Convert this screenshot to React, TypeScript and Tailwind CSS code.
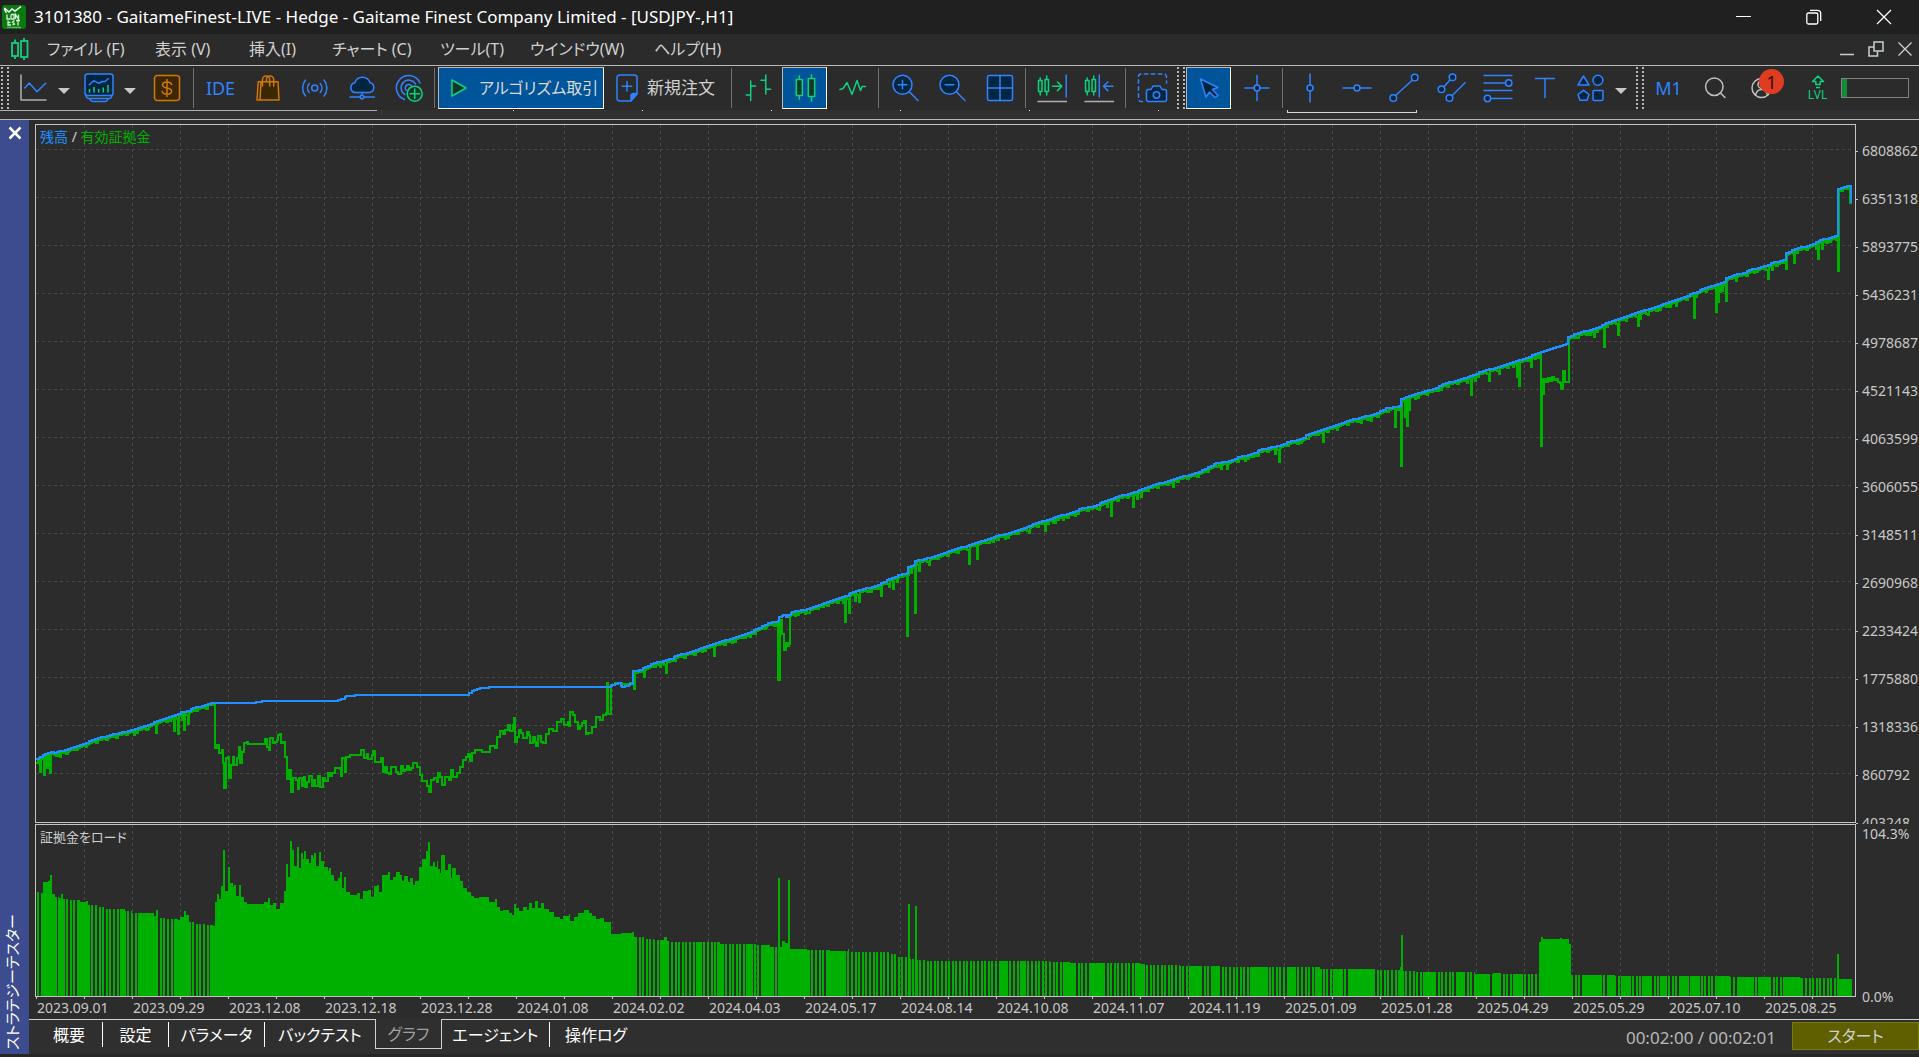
import React from "react";

type Pt = [number, number];

const BLUE = "#3083ff";
const GREEN = "#10d080";
const NAVY = "#00253f";
const ORANGE = "#d07800";

/* ---------- chart data (drawing units) ---------- */

const BALANCE: Pt[] = [
  [36,759],[40,757],[45,754],[51,752],[54,753],[59,751],[65,750],[80,745],[95,739],[110,735],[132,730],[145,726],[160,720],[175,715],[181,712],[188,711],[193,708],[202,706],[212,703],[250,703],[262,701],[335,701],[342,699],[346,696],[358,695],[466,695],[474,690],[480,688],[492,687],[608,687],[612,685],[618,683],[622,687],[626,686],[630,684],[632,684],[633,671],[640,670],[645,667],[654,663],[671,659],[675,656],[693,651],[701,648],[713,644],[730,639],[736,637],[748,633],[756,629],[769,623],[778,621],[779,617],[783,615],[786,617],[788,615],[792,612],[807,609],[824,603],[836,599],[846,596],[850,593],[860,590],[875,586],[889,579],[899,575],[907,573],[908,567],[914,565],[915,561],[929,558],[949,551],[969,545],[982,541],[996,536],[1006,534],[1029,526],[1033,524],[1047,520],[1055,517],[1073,512],[1082,508],[1094,506],[1102,502],[1116,497],[1135,492],[1139,490],[1153,485],[1171,480],[1180,477],[1196,473],[1208,467],[1216,463],[1226,462],[1239,457],[1255,453],[1259,450],[1278,446],[1288,442],[1304,438],[1306,435],[1324,429],[1333,426],[1347,421],[1374,414],[1387,408],[1400,406],[1401,399],[1406,397],[1419,393],[1433,389],[1443,384],[1465,378],[1470,376],[1480,372],[1504,365],[1520,360],[1541,352],[1557,347],[1567,344],[1568,337],[1575,334],[1596,328],[1606,323],[1618,319],[1632,314],[1649,309],[1663,304],[1675,300],[1694,293],[1702,289],[1712,286],[1718,284],[1725,282],[1726,278],[1734,275],[1744,273],[1749,270],[1765,266],[1771,263],[1785,260],[1786,253],[1795,249],[1810,245],[1820,240],[1837,236],[1838,189],[1844,187],[1849,186],[1851,187],[1851,202],
];

/* short equity drawdowns: position and lowest level */
const DIPS: Pt[] = [
  [40,772],[44,775],[46,768],[48,768],[50,773],[61,757],[68,752],[87,747],[135,735],[148,729],[156,733],[170,721],[174,731],[179,734],[182,720],[185,730],[188,724],
  [644,677],[661,667],[666,673],[703,652],[714,656],[732,643],[751,637],[767,628],[795,616],[806,614],[810,613],[824,607],[843,603],[846,622],[849,613],[856,601],[860,602],[871,592],[882,596],[889,587],[893,589],[897,582],[908,636],[911,573],[915,613],[919,571],
  [930,565],[969,564],[978,559],[990,543],[994,542],[1005,539],[1030,533],[1045,531],[1053,523],[1056,523],[1064,520],[1075,516],[1100,510],[1108,507],[1111,516],[1134,507],[1137,499],[1141,497],[1174,487],[1222,469],[1228,469],[1246,461],[1254,457],[1276,454],[1280,462],[1302,443],[1324,442],[1338,430],[1361,423],[1372,421],[1395,427],[1401,466],[1405,417],[1408,426],[1410,410],[1416,399],[1427,395],[1441,390],[1467,383],[1471,395],[1476,381],[1489,381],[1499,374],[1514,367],[1517,377],[1519,386],[1532,367],[1536,359],
  [1575,338],[1579,338],[1590,335],[1594,337],[1605,347],[1619,335],[1627,321],[1639,326],[1641,319],[1649,315],[1660,310],[1671,307],[1676,306],[1694,318],[1697,297],[1707,292],[1716,312],[1718,302],[1720,292],[1723,291],[1726,301],[1737,281],[1755,273],[1769,279],[1772,270],[1786,269],[1794,263],[1816,249],[1819,259],[1822,249],[1830,242],
];

/* long stretches where equity leaves the balance line */
const SWINGS: Pt[][] = [
  [[208,705],[214,705],[215,748],[217,745],[219,753],[222,750],[223,763],[224,788],[226,758],[228,757],[229,778],[231,765],[233,757],[234,765],[237,758],[239,747],[240,763],[242,752],[244,743],[247,742],[248,744],[263,744],[265,739],[267,747],[269,750],[270,738],[273,743],[275,742],[277,740],[278,735],[280,734],[281,743],[283,742],[285,757],[287,779],[289,770],[291,792],[293,778],[296,780],[298,789],[299,778],[302,786],[304,777],[305,787],[307,782],[309,776],[312,786],[313,780],[315,786],[318,776],[320,787],[323,778],[325,781],[328,773],[330,776],[332,773],[335,768],[340,769],[341,776],[342,758],[345,772],[346,757],[350,755],[359,755],[361,750],[364,758],[367,754],[368,759],[372,755],[373,751],[375,762],[378,762],[381,758],[383,772],[385,767],[387,773],[389,774],[391,767],[395,767],[396,772],[398,774],[401,766],[403,771],[405,770],[407,766],[409,770],[411,768],[413,763],[415,763],[417,767],[420,775],[422,781],[425,781],[427,786],[429,792],[431,780],[434,778],[437,782],[438,773],[440,777],[442,785],[445,777],[449,780],[451,770],[453,777],[457,773],[460,767],[463,760],[466,757],[468,754],[470,761],[472,753],[475,750],[482,752],[488,752],[490,746],[495,748],[497,737],[500,731],[503,734],[505,730],[508,725],[510,731],[513,725],[514,718],[515,742],[517,737],[519,730],[521,733],[523,738],[527,732],[529,735],[530,743],[533,737],[535,742],[536,746],[538,736],[541,742],[543,743],[546,734],[549,729],[553,731],[557,722],[561,719],[564,725],[568,722],[569,726],[570,712],[573,715],[575,722],[578,729],[580,726],[582,723],[584,721],[586,734],[588,733],[592,727],[596,717],[600,720],[603,715],[606,713],[607,683],[608,714],[610,714],[611,685],[615,683],[622,684],[630,683],[633,683],[634,689],[635,672]],
  [[777,623],[778,680],[780,620],[782,634],[784,650],[786,643],[788,646],[789,644],[790,616]],
  [[1540,355],[1541,446],[1542,379],[1543,394],[1544,379],[1546,382],[1548,378],[1550,381],[1552,377],[1554,380],[1556,379],[1558,382],[1560,383],[1561,389],[1563,371],[1565,382],[1567,382],[1569,339]],
  [[1837,238],[1838,271],[1839,191],[1843,189],[1848,188],[1850,203],[1851,203]],
];

/* upper edge of the deposit load bars */
const LOAD: Pt[] = [
  [36,892],[41,893],[43,882],[48,881],[50,875],[52,894],[55,897],[59,898],[61,894],[63,899],[70,900],[80,902],[86,901],[88,905],[97,907],[105,909],[125,911],[132,913],[145,913],[154,916],[156,910],[158,918],[165,919],[178,920],[180,917],[184,911],[186,915],[189,922],[195,924],[206,925],[213,926],[215,902],[217,894],[219,899],[221,886],[223,850],[225,891],[228,867],[230,883],[233,887],[234,885],[236,896],[239,885],[241,897],[244,902],[247,904],[264,902],[268,898],[270,905],[273,903],[276,909],[280,903],[284,891],[286,864],[288,877],[290,841],[292,850],[294,866],[297,847],[299,868],[301,853],[303,859],[304,851],[306,859],[309,863],[311,855],[313,858],[314,853],[316,866],[319,852],[321,861],[324,867],[328,871],[329,868],[331,875],[334,881],[338,878],[340,872],[342,888],[344,877],[346,892],[350,895],[357,893],[360,899],[363,891],[368,890],[371,897],[374,886],[377,885],[379,892],[382,875],[388,872],[390,880],[393,877],[396,872],[400,875],[402,881],[404,876],[408,882],[410,878],[413,885],[415,881],[419,867],[422,859],[426,851],[428,842],[430,866],[433,862],[435,867],[437,861],[438,869],[440,873],[441,855],[445,870],[448,864],[451,878],[452,868],[456,875],[460,881],[463,888],[467,892],[471,896],[474,898],[479,897],[489,902],[495,899],[497,907],[500,911],[503,910],[509,913],[512,915],[514,904],[516,908],[519,911],[523,907],[527,910],[529,903],[532,908],[535,901],[538,908],[541,903],[544,909],[549,912],[554,917],[560,919],[563,916],[569,914],[570,921],[574,917],[578,913],[584,910],[589,913],[592,916],[596,919],[600,918],[604,922],[611,934],[621,933],[632,932],[634,937],[646,939],[654,940],[664,937],[667,941],[670,942],[697,942],[720,944],[756,945],[770,947],[778,878],[780,947],[782,941],[785,943],[788,880],[790,949],[807,950],[830,951],[848,949],[851,952],[880,952],[890,954],[897,957],[907,958],[908,904],[910,959],[915,906],[917,960],[927,961],[990,961],[1050,962],[1070,963],[1140,964],[1145,965],[1180,966],[1220,967],[1290,967],[1320,969],[1360,969],[1375,970],[1400,967],[1401,935],[1403,971],[1415,972],[1475,974],[1493,973],[1501,974],[1539,942],[1541,937],[1543,939],[1560,938],[1562,939],[1569,944],[1571,975],[1615,976],[1730,977],[1800,978],[1837,954],[1839,979],[1853,979],
];

const SOLID: Pt[] = [
  [43,55],[58,62],[77,88],[120,125],[139,157],[176,189],[210,213],[215,634],[662,668],[696,700],[717,723],[746,752],[761,772],[778,797],[799,807],[828,845],[908,909],[915,916],[1000,1006],[1020,1025],[1065,1073],[1089,1103],[1137,1142],[1189,1201],[1213,1217],[1250,1267],[1287,1293],[1317,1321],[1335,1341],[1350,1359],[1361,1374],[1400,1402],[1423,1433],[1456,1462],[1475,1487],[1493,1500],[1514,1520],[1539,1570],[1583,1600],[1609,1614],[1623,1628],[1642,1651],[1660,1666],[1679,1688],[1690,1699],[1716,1728],[1737,1753],[1758,1768],[1783,1802],[1837,1851],
];

function stepPath(points: Pt[]) {
  return points.map(([x, y], i) => (i === 0 ? `M${x} ${y}` : `H${x}V${y}`)).join("");
}

function valueAt(points: Pt[], x: number) {
  for (let i = 1; i < points.length; i++) {
    const [x1, y1] = points[i];
    if (x1 >= x) {
      const [x0, y0] = points[i - 1];
      return x1 === x0 ? y1 : Math.round(y0 + ((y1 - y0) * (x - x0)) / (x1 - x0));
    }
  }
  return points[points.length - 1][1];
}

function levelAt(points: Pt[], x: number) {
  let y = points[0][1];
  for (const p of points) {
    if (p[0] > x) break;
    y = p[1];
  }
  return y;
}

function balancePoints(): Pt[] {
  const out: Pt[] = [];
  for (let i = 0; i < BALANCE.length; i++) {
    const [x, y] = BALANCE[i];
    if (i > 0) {
      for (let k = BALANCE[i - 1][0] + 3; k < x; k += 3) out.push([k, valueAt(BALANCE, k)]);
    }
    out.push([x, y]);
  }
  return out;
}

function equityPoints(): Pt[] {
  const out: Pt[] = [];
  let x = 36;
  let dip = 0;
  let n = 0;
  while (x < 1852) {
    const swing = SWINGS.find((s) => x >= s[0][0] && x < s[s.length - 1][0]);
    if (swing) {
      out.push(...swing);
      x = swing[swing.length - 1][0] + 1;
      continue;
    }
    while (dip < DIPS.length && DIPS[dip][0] < x - 2) dip++;
    const base = valueAt(BALANCE, x) + 2;
    if (dip < DIPS.length && Math.abs(DIPS[dip][0] - x) <= 1) {
      out.push([x, DIPS[dip][1]], [x + 1, base]);
      dip++;
    } else {
      out.push([x, base + ((n * 7) % 5 === 0 ? 2 : 0)]);
    }
    n++;
    x += 2;
  }
  return out;
}

function loadPath() {
  const bars: string[] = [];
  for (let x = 36; x < 1852; x++) {
    const solid = SOLID.some(([a, b]) => x >= a && x <= b);
    const phase = ((x - 37) * 10) % 36;
    if (solid || (phase >= 0 && phase < 20)) bars.push(`M${x} 996V${levelAt(LOAD, x)}h1V996z`);
  }
  return bars.join("");
}

const BALANCE_PATH = stepPath(balancePoints());
const EQUITY_PATH = stepPath(equityPoints());
const LOAD_PATH = loadPath();

const COLS = Array.from({ length: 37 }, (_, i) => 84 + i * 48);
const ROWS = Array.from({ length: 14 }, (_, i) => 149 + i * 48);

const VALUES = ["6808862","6351318","5893775","5436231","4978687","4521143","4063599","3606055","3148511","2690968","2233424","1775880","1318336","860792","403248"];
const DATES = ["2023.09.01","2023.09.29","2023.12.08","2023.12.18","2023.12.28","2024.01.08","2024.02.02","2024.04.03","2024.05.17","2024.08.14","2024.10.08","2024.11.07","2024.11.19","2025.01.09","2025.01.28","2025.04.29","2025.05.29","2025.07.10","2025.08.25"];

/* ---------- icons ---------- */

function Icon({ children, color = BLUE }: { children: React.ReactNode; color?: string }) {
  return (
    <svg viewBox="0 0 32 32" className="size-8 shrink-0" fill="none" stroke={color} strokeWidth="1.5" strokeLinecap="round" strokeLinejoin="round" aria-hidden="true">
      {children}
    </svg>
  );
}

function ToolButton({ label, active, children, className = "w-[47px] justify-center" }: { label: string; active?: boolean; children: React.ReactNode; className?: string }) {
  return (
    <button
      type="button"
      aria-label={label}
      className={`flex h-[42px] shrink-0 items-center ${className} ${active ? "border border-t-[#b8b8b8] border-l-[#b8b8b8] border-r-white border-b-white bg-[#005499]" : ""}`}
    >
      {children}
    </button>
  );
}

function Drop({ label }: { label: string }) {
  return (
    <button type="button" aria-label={label} className="flex h-[42px] w-3 shrink-0 items-center justify-center pt-1.5">
      <svg viewBox="0 0 12 6" className="h-1.5 w-3" fill="#c8c8c8" aria-hidden="true"><path d="M0 0H12L6 6z" /></svg>
    </button>
  );
}

const Sep = () => <span className="mr-[3px] ml-0.5 h-10 w-px shrink-0 bg-[#707070]" />;

const Grip = () => (
  <span className="flex h-[42px] w-2.5 shrink-0 gap-1 pl-px">
    <span className="w-0.5 bg-[repeating-linear-gradient(to_bottom,#b8b8b8_0_2px,transparent_2px_4px)]" />
    <span className="w-0.5 bg-[repeating-linear-gradient(to_bottom,#b8b8b8_0_2px,transparent_2px_4px)]" />
  </span>
);

function Toolbar() {
  return (
    <div className="flex h-11 items-center bg-[#2b2b2b]">
      <Grip />
      <ToolButton label="Charts" className="w-12 justify-center">
        <Icon>
          <path d="M3 3V28H28" stroke="#b0b0b0" />
          <path d="M6.7 16 11.3 11 19 19.7 27.7 11.3" />
        </Icon>
      </ToolButton>
      <Drop label="Chart list" />
      <ToolButton label="Indicators" className="w-[54px] justify-center pl-1">
        <Icon>
          <rect x="2" y="2" width="28" height="21.5" rx="2.5" fill={NAVY} />
          <path d="M3 23.5Q3.5 26.5 6 26.5H26Q28.5 26.5 29 23.5M6.5 26.5Q8 29.5 10 29.5H22Q24 29.5 25.5 26.5" />
          <path d="M6.3 12.7 10.7 8.7 16 11.3 19 9.5H22L25.3 6.7" />
          <path d="M6.5 20.5V17M11 20.5V15M15.7 20.5V17M20.3 20.5V15.5M25 20.5V13" stroke={GREEN} strokeLinecap="butt" />
        </Icon>
      </ToolButton>
      <Drop label="Indicator list" />
      <ToolButton label="Quotes" className="w-[55px] justify-center pl-1.5">
        <Icon color={ORANGE}>
          <rect x="3.5" y="3.5" width="25" height="25" rx="3" fill="#3b2700" />
          <path d="M20.6 12.6C20.2 10.9 18.4 10 16 10c-2.6 0-4.4 1.1-4.4 2.9 0 4.3 9 2.1 9 6.3 0 1.9-1.9 2.9-4.6 2.9s-4.5-1-4.8-2.8M16 7.5v17" />
        </Icon>
      </ToolButton>
      <Sep />
      <ToolButton label="IDE"><span className="text-lg text-[#3083ff]">IDE</span></ToolButton>
      <ToolButton label="Market">
        <Icon color={ORANGE}>
          <path d="M6.2 9.7H26L27 28H5z" fill="#3b2700" />
          <path d="M9 9.7 8 28M10.5 14V7.5a3.6 3.6 0 0 1 7.2 0V14M14.5 9.7V7.5a3.6 3.6 0 0 1 7.2 0V14" />
        </Icon>
      </ToolButton>
      <ToolButton label="Signals">
        <Icon>
          <circle cx="15.7" cy="16" r="3" />
          <path d="M10.2 11.5a7 7 0 0 0 0 9M21.2 11.5a7 7 0 0 1 0 9M6.5 8a12.5 12.5 0 0 0 0 16M25 8a12.5 12.5 0 0 1 0 16" />
        </Icon>
      </ToolButton>
      <ToolButton label="Cloud">
        <Icon>
          <path d="M9 20.5H23.5A5 5 0 0 0 24 10.7 8 8 0 0 0 8.8 10.7 5 5 0 0 0 9 20.5z" fill={NAVY} />
          <path d="M16 20.5V23M4 25H14M18 25H28.5" />
          <circle cx="16" cy="25" r="1.8" />
        </Icon>
      </ToolButton>
      <ToolButton label="Hosting">
        <Icon>
          <path d="M11.5 27.5A12.3 12.3 0 1 1 27 11M12 22.5A7.7 7.7 0 1 1 22.5 12M13.5 18.5A3.4 3.4 0 1 1 18.5 14" />
          <g stroke={GREEN}>
            <circle cx="21.7" cy="21.7" r="7.5" fill="#10382a" />
            <path d="M21.7 17V26.4M17 21.7H26.4" />
          </g>
        </Icon>
      </ToolButton>
      <Sep />
      <ToolButton label="アルゴリズム取引" active className="w-[166px] gap-3 pl-3">
        <svg viewBox="0 0 16 18" className="h-[18px] w-4" fill="#10382a" stroke={GREEN} strokeWidth="1.5" strokeLinejoin="round" aria-hidden="true"><path d="M1 1 15 9 1 17z" /></svg>
        <span className="text-base whitespace-nowrap text-[#d8d8d8]">アルゴリズム取引</span>
      </ToolButton>
      <ToolButton label="新規注文" className="w-[125px] gap-1 pl-[7px]">
        <Icon>
          <path d="M9 3H23a3 3 0 0 1 3 3V22L20 29H9a3 3 0 0 1-3-3V6a3 3 0 0 1 3-3z" />
          <path d="M26 21.5H22.5a2.5 2.5 0 0 0-2.5 2.5V28.5z" fill={BLUE} />
          <path d="M16 9.5V19M11.2 14.3H20.8" />
        </Icon>
        <span className="text-[17px] whitespace-nowrap text-[#d0d0d0]">新規注文</span>
      </ToolButton>
      <Sep />
      <ToolButton label="Bar chart">
        <Icon color={GREEN}><path d="M7.7 9V28.5M3.2 23H7.7M7.7 14H12.6M22.8 3V22M18 8.3H22.8M22.8 17.3H27.7" /></Icon>
      </ToolButton>
      <ToolButton label="Candlesticks" active className="mr-0.5 w-[45px] justify-center">
        <Icon color={GREEN}>
          <path d="M10.3 4V27M22.5 3V29" />
          <rect x="7.3" y="7.5" width="6" height="16" fill="#123a2a" />
          <rect x="19.3" y="6.5" width="6.4" height="18" fill="#123a2a" />
        </Icon>
      </ToolButton>
      <ToolButton label="Line chart">
        <Icon color={GREEN}><path d="M3 17.5 6 16.5 10 10.5 15 22.5 20 8.5 23.5 18.5 25 14.5H28.5" /></Icon>
      </ToolButton>
      <Sep />
      <ToolButton label="Zoom in">
        <Icon><circle cx="12.5" cy="12.8" r="9.5" fill={NAVY} /><path d="M19.5 20 28 28.5M12.5 8.5V17M8.2 12.8H16.8" /></Icon>
      </ToolButton>
      <ToolButton label="Zoom out">
        <Icon><circle cx="12.5" cy="12.8" r="9.5" fill={NAVY} /><path d="M19.5 20 28 28.5M8.2 12.8H16.8" /></Icon>
      </ToolButton>
      <ToolButton label="Tile windows">
        <Icon><rect x="3.5" y="3.5" width="25" height="25" rx="2" fill={NAVY} /><path d="M16 3.5V28.5M3.5 16H28.5" /></Icon>
      </ToolButton>
      <Sep />
      <ToolButton label="Auto scroll">
        <Icon color={GREEN}>
          <path d="M3.2 6V23M9.7 4V23" /><rect x="1.5" y="8.5" width="3.5" height="11" fill="#123a2a" /><rect x="8" y="7.5" width="3.5" height="12" fill="#123a2a" />
          <path d="M15.5 14.3H24.8M20.5 10 24.8 14.3 20.5 18.6" />
          <path d="M29.2 3V25" stroke={BLUE} /><path d="M1 29.5H29.5" stroke="#b0b0b0" />
        </Icon>
      </ToolButton>
      <ToolButton label="Chart shift">
        <Icon color={GREEN}>
          <path d="M3.2 6V23M9.7 4V23" /><rect x="1.5" y="8.5" width="3.5" height="11" fill="#123a2a" /><rect x="8" y="7.5" width="3.5" height="12" fill="#123a2a" />
          <path d="M15.3 3V25M29 14.3H19.5M23.8 10 19.5 14.3 23.8 18.6" stroke={BLUE} /><path d="M1 29.5H29.5" stroke="#b0b0b0" />
        </Icon>
      </ToolButton>
      <Sep />
      <ToolButton label="Screenshot">
        <Icon>
          <path d="M5.5 29.5H4a2.5 2.5 0 0 1-2.5-2.5V4.5A2.5 2.5 0 0 1 4 2H27a2.5 2.5 0 0 1 2.5 2.5V11" strokeDasharray="3.5 3.5" />
          <path d="M11.5 17.5H14L16 14H23L25 17.5H27.5a2 2 0 0 1 2 2V27.5a2 2 0 0 1-2 2H11.5a2 2 0 0 1-2-2V19.5a2 2 0 0 1 2-2z" fill={NAVY} />
          <circle cx="19.5" cy="23" r="3.2" />
        </Icon>
      </ToolButton>
      <Grip />
      <ToolButton label="Cursor" active className="mr-0.5 w-[45px] justify-center">
        <Icon><path d="M7.5 7 25 15.5 19.5 17.5 25 23.5 22 25.5 16.5 20 13 25z" fill={NAVY} /></Icon>
      </ToolButton>
      <ToolButton label="Crosshair">
        <Icon><path d="M16 3.5V13M16 19V28.5M4 16H13M19 16H28" /><circle cx="16" cy="16" r="3" fill={NAVY} /></Icon>
      </ToolButton>
      <Sep />
      <ToolButton label="Vertical line">
        <Icon><path d="M16 2V13M16 19V30" /><circle cx="16" cy="16" r="3" fill={NAVY} /></Icon>
      </ToolButton>
      <ToolButton label="Horizontal line">
        <Icon><path d="M2 16H13M19 16H30" /><circle cx="16" cy="16" r="3" fill={NAVY} /></Icon>
      </ToolButton>
      <ToolButton label="Trend line">
        <Icon><path d="M7.5 23.5 24.5 8" /><circle cx="5.3" cy="26" r="3.3" fill={NAVY} /><circle cx="26.7" cy="5.5" r="3.3" fill={NAVY} /></Icon>
      </ToolButton>
      <ToolButton label="Channel">
        <Icon><path d="M8.8 15 15.2 7.7M17 23.7 30 10.7" /><circle cx="6.5" cy="17.3" r="3.3" fill={NAVY} /><circle cx="17.5" cy="5.3" r="3.3" fill={NAVY} /><circle cx="14.5" cy="26" r="3.3" fill={NAVY} /></Icon>
      </ToolButton>
      <ToolButton label="Fibonacci">
        <Icon><path d="M2 3.5H30M2 11H23.5M2 18.5H30M9 26.5H30" /><circle cx="26.7" cy="11" r="3.2" fill={NAVY} /><circle cx="5.5" cy="26.5" r="3.2" fill={NAVY} /></Icon>
      </ToolButton>
      <ToolButton label="Text label"><Icon><path d="M6.5 6.5H25.5M16 6.5V25.5" /></Icon></ToolButton>
      <ToolButton label="Shapes">
        <Icon>
          <g fill={NAVY}>
            <path d="M7.5 4 13 13H2z" /><circle cx="21.9" cy="8.2" r="5" />
            <path d="M7.5 18.3 13 22.5 11 28.2H4L2 22.5z" /><rect x="17" y="18.5" width="10" height="10" rx="1" />
          </g>
        </Icon>
      </ToolButton>
      <Drop label="Shape list" />
      <span className="w-2 shrink-0" />
      <Grip />
      <ToolButton label="M1"><span className="text-lg text-[#3083ff]">M1</span></ToolButton>
      <ToolButton label="Search"><Icon color="#c0c0c0"><circle cx="14.3" cy="14.7" r="8.7" /><path d="M20.5 21 25 25.5" /></Icon></ToolButton>
      <div className="relative flex shrink-0">
        <ToolButton label="Account">
          <Icon color="#c0c0c0"><circle cx="14.5" cy="16" r="9.5" /><circle cx="15" cy="12.5" r="4" /><path d="M8.5 23c1-4 3.5-5.5 6-5.5s5 1.5 6 5.5" /></Icon>
        </ToolButton>
        <span className="absolute top-0.5 left-5 flex size-[25px] items-center justify-center rounded-full bg-[#e03c22] text-lg text-[#301008]">1</span>
      </div>
      <button type="button" aria-label="Connection level" className="ml-2 flex w-[47px] shrink-0 flex-col items-center text-[#10d080]">
        <svg viewBox="0 0 14 14" className="size-3.5" fill="none" stroke={GREEN} strokeWidth="1.5" strokeLinejoin="round" aria-hidden="true"><path d="M7 1 12.5 6.500H9.200V9.500H4.800V6.500H1.500zM5 12.500H9" /></svg>
        <span className="text-xs leading-3">LVL</span>
      </button>
      <div className="mr-2.5 ml-auto h-5 w-[68px] shrink-0 border border-[#808080]">
        <div className="h-full w-[5px] bg-[#138a36]" />
      </div>
    </div>
  );
}

/* ---------- chrome ---------- */

function TitleBar() {
  return (
    <header className="flex h-[34px] items-center bg-[#202020] text-white">
      <svg viewBox="0 0 24 24" className="ml-0.5 size-6" fill="none" stroke="#fff" aria-hidden="true">
        <rect width="24" height="24" rx="3" fill="#0a7a10" stroke="none" />
        <path d="M2.5 3 7 7 10 4 13 6 19 1.5M3 3C1 5 5 6 4 8" strokeWidth="1.5" />
        <path d="M5 9.5V14H8M9 9.5V14H12V9.5H9M13.5 14V9.5L16.5 14V9.5M6 15.5V20H9M6 17.5H8.500M12.500 15.500 10.500 17 12.500 19 10.500 20M14 15.500H18M16 15.500V20.500" strokeWidth="1.3" stroke="#d8f0d8" />
        <path d="M5 22.3H19" strokeWidth="1" stroke="#7fbf7f" />
      </svg>
      <h1 className="ml-2 text-[17px] leading-6 whitespace-nowrap">3101380 - GaitameFinest-LIVE - Hedge - Gaitame Finest Company Limited - [USDJPY-,H1]</h1>
      <div className="ml-auto flex h-full">
        <button type="button" aria-label="Minimize" className="flex w-[70px] items-center justify-center">
          <svg viewBox="0 0 16 16" className="size-4" stroke="#fff" aria-hidden="true"><path d="M0 7.5H15" /></svg>
        </button>
        <button type="button" aria-label="Restore" className="flex w-[70px] items-center justify-center">
          <svg viewBox="0 0 16 16" className="size-4" fill="none" stroke="#fff" strokeWidth="1.3" aria-hidden="true"><rect x="0.8" y="4" width="11" height="11" rx="1.5" /><path d="M4 1.3H11.5A3 3 0 0 1 14.7 4.5V12" /></svg>
        </button>
        <button type="button" aria-label="Close" className="flex w-[70px] items-center justify-center">
          <svg viewBox="0 0 16 16" className="size-4" stroke="#fff" strokeWidth="1.3" aria-hidden="true"><path d="M1 1 15 15M15 1 1 15" /></svg>
        </button>
      </div>
    </header>
  );
}

const MENUS = [
  { label: "ファイル (F)", width: "w-[108px]" },
  { label: "表示 (V)", width: "w-[94px]" },
  { label: "挿入(I)", width: "w-[83px]" },
  { label: "チャート (C)", width: "w-[108px]" },
  { label: "ツール(T)", width: "w-[90px]" },
  { label: "ウインドウ(W)", width: "w-[124px]" },
  { label: "ヘルプ(H)", width: "w-[90px]" },
];

function MenuBar() {
  return (
    <nav className="flex h-[31px] items-center bg-[#2b2b2b] pb-0.5 text-base text-[#d0d0d0]">
      <svg viewBox="0 0 18 24" className="ml-[11px] h-6 w-[18px]" fill="none" stroke={GREEN} strokeWidth="1.8" aria-hidden="true">
        <path d="M4 2.5V22M13 1V23" /><rect x="1" y="6" width="6" height="13" fill="#2b2b2b" /><rect x="10" y="4" width="6.5" height="16" fill="#2b2b2b" />
      </svg>
      <div className="ml-[18px] flex">
        {MENUS.map((m) => (
          <button key={m.label} type="button" className={`text-left whitespace-nowrap ${m.width}`}>{m.label}</button>
        ))}
      </div>
      <div className="ml-auto flex">
        <button type="button" aria-label="Minimize chart" className="flex w-[29px] justify-center">
          <svg viewBox="0 0 16 16" className="size-4" stroke="#c8d0d0" strokeWidth="1.5" aria-hidden="true"><path d="M1 13.5H15" /></svg>
        </button>
        <button type="button" aria-label="Restore chart" className="flex w-[29px] justify-center">
          <svg viewBox="0 0 16 16" className="size-4" fill="none" stroke="#c8d0d0" strokeWidth="1.5" aria-hidden="true"><path d="M6 6H1V15H9.5V10.5" /><rect x="6" y="1" width="9" height="9" /></svg>
        </button>
        <button type="button" aria-label="Close chart" className="flex w-[29px] justify-center">
          <svg viewBox="0 0 16 16" className="size-4" stroke="#c8d0d0" strokeWidth="1.3" aria-hidden="true"><path d="M1.5 1.5 14.5 14.5M14.5 1.5 1.5 14.5" /></svg>
        </button>
      </div>
    </nav>
  );
}

function ToolbarEdge() {
  return (
    <div className="flex h-[9px] items-start bg-[#303030]">
      <span className="h-px w-[377px] bg-[#b0b0b0]" />
      <span className="ml-1 h-[5px] w-px bg-[#444]" />
      <span className="w-[131px]" />
      {[0, 1, 2, 3, 4, 5].map((i) => (
        <span key={i} className="w-[129px]"><span className="block size-px bg-white" /></span>
      ))}
      <span className="h-[3px] w-[130px] border border-t-0 border-[#d8d8d8]" />
    </div>
  );
}

function Chart() {
  return (
    <section aria-label="Tester graph" className="flex grow flex-col bg-[#2c2c2c] pt-1 pl-1.5">
      <div className="flex grow">
        <div className="flex grow flex-col gap-px">
          <div className="relative min-h-[600px] grow border border-[#c4c4c4]">
            <svg viewBox="36 125 1819 697" preserveAspectRatio="none" className="absolute inset-0 size-full" fill="none" shapeRendering="crispEdges" role="img" aria-label="Balance and equity">
              <g stroke="#484848" strokeDasharray="3 3">
                {COLS.map((x) => <path key={x} d={`M${x}.5 125V822`} />)}
                {ROWS.map((y) => <path key={y} d={`M36 ${y}.5H1852`} />)}
              </g>
              <path d={EQUITY_PATH} stroke="#00b000" strokeWidth="2" strokeLinecap="square" />
              <path d={BALANCE_PATH} stroke="#1e90ff" strokeWidth="2" strokeLinecap="square" />
            </svg>
            <p className="absolute top-0.5 left-1 text-sm text-[#d0d0d0]">
              <span className="text-[#1e90ff]">残高</span> / <span className="text-[#00b000]">有効証拠金</span>
            </p>
          </div>
          <div className="relative h-[173px] border border-[#c4c4c4]">
            <svg viewBox="36 825 1819 171" preserveAspectRatio="none" className="absolute inset-0 size-full" fill="none" shapeRendering="crispEdges" role="img" aria-label="Deposit load">
              <g stroke="#484848" strokeDasharray="3 3">
                {COLS.map((x) => <path key={x} d={`M${x}.5 825V996`} />)}
              </g>
              <path d={LOAD_PATH} fill="#00b000" />
            </svg>
            <p className="absolute top-0.5 left-1 text-[13px] leading-5 text-[#d0d0d0]">証拠金をロード</p>
          </div>
        </div>
        <div className="flex w-[63px] shrink-0 flex-col text-sm text-[#c8c8c8]">
          <ol className="h-0 grow overflow-hidden pt-[3px]">
            {VALUES.map((v) => (
              <li key={v} className="flex h-12 items-center gap-1 leading-4">
                <span className="h-px w-0.5 bg-[#c4c4c4]" />
                {v}
              </li>
            ))}
          </ol>
          <div className="flex h-[173px] flex-col justify-between pl-1.5 leading-4">
            <span className="pt-0.5">104.3%</span>
            <span className="-mb-2">0.0%</span>
          </div>
        </div>
      </div>
      <ol className="flex h-[22px] w-[1824px] overflow-hidden pl-px text-sm text-[#c8c8c8]">
        {DATES.map((d) => (
          <li key={d} className="flex w-24 shrink-0 flex-col">
            <span className="flex h-0.5">
              <span className="flex-1 border-l border-[#c4c4c4]" />
              <span className="flex-1 border-l border-[#c4c4c4]" />
            </span>
            <span className="pl-px leading-[18px]">{d}</span>
          </li>
        ))}
      </ol>
    </section>
  );
}

const TABS = [
  { label: "概要", width: "w-[67px]" },
  { label: "設定", width: "w-[66px]" },
  { label: "パラメータ", width: "w-[96px]" },
  { label: "バックテスト", width: "w-[110px]" },
  { label: "グラフ", width: "w-[67px]" },
  { label: "エージェント", width: "w-[108px]" },
  { label: "操作ログ", width: "w-[92px]" },
];

function TabBar() {
  return (
    <footer className="flex h-[35px] items-start bg-[#2f2f2f] text-base text-white">
      <div role="tablist" className="flex grow">
        <span className="w-[7px] border-t border-[#d0d0d0]" />
        {TABS.map((t, i) =>
          t.label === "グラフ" ? (
            <button key={t.label} role="tab" aria-selected="true" type="button" className={`h-[30px] border border-t-0 border-[#d0d0d0] text-[#a0a0a0] ${t.width}`}>{t.label}</button>
          ) : (
            <div key={t.label} className={`flex h-[30px] items-center border-t border-[#d0d0d0] ${t.width}`}>
              <button role="tab" aria-selected="false" type="button" className="grow whitespace-nowrap">{t.label}</button>
              {i !== 3 && i !== 6 && <span className="h-[25px] w-px bg-white" />}
            </div>
          ),
        )}
        <span className="grow border-t border-[#d0d0d0]" />
      </div>
      <div className="flex border-t border-[#d0d0d0] pt-0.5">
        <span className="mr-4 pt-1 text-[17px] leading-6 text-[#b8b8b8]">00:02:00 / 00:02:01</span>
        <button type="button" className="h-7 w-[127px] border border-[#7c7c00] bg-[#5f5f00] text-[#d0d0d0]">スタート</button>
      </div>
    </footer>
  );
}

export default function App() {
  return (
    <div className="flex min-h-screen flex-col overflow-hidden bg-[#262626] pb-[3px] font-['Noto_Sans','Noto_Sans_CJK_JP',sans-serif] [font-feature-settings:'palt']">
      <TitleBar />
      <MenuBar />
      <div className="border-t border-[#b8b8b8]">
        <Toolbar />
        <ToolbarEdge />
      </div>
      <main className="flex grow border-t border-[#b8b8b8]">
        <aside className="flex w-[29px] shrink-0 flex-col items-center justify-between bg-[#3c4c8f] pt-1.5 pb-1 text-white">
          <button type="button" aria-label="Close tester">
            <svg viewBox="0 0 14 14" className="size-3.5" stroke="#fff" strokeWidth="2.5" aria-hidden="true"><path d="M1.5 1.5 12.5 12.5M12.5 1.5 1.5 12.5" /></svg>
          </button>
          <h2 className="mr-1.5 rotate-180 text-[15px] leading-5 whitespace-nowrap [text-orientation:sideways] [writing-mode:vertical-rl]">ストラテジーテスター</h2>
        </aside>
        <div className="flex min-w-0 grow flex-col">
          <Chart />
          <TabBar />
        </div>
      </main>
    </div>
  );
}
